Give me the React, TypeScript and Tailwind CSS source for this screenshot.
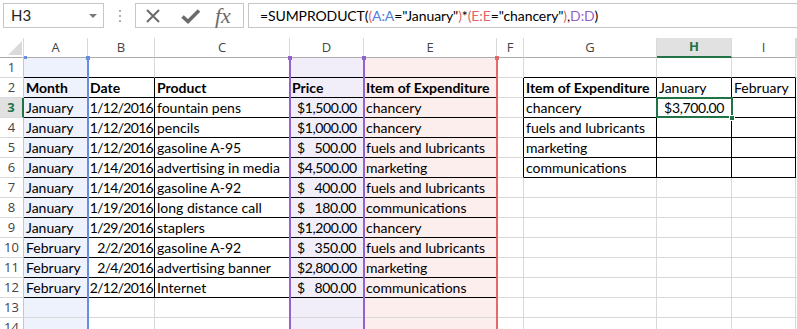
import type { ReactNode } from "react";

const COLS = ["A", "B", "C", "D", "E", "F", "G", "H", "I", ""];

type Row = [string, string, string, string, string];

const MAIN: Row[] = [
  ["Month", "Date", "Product", "Price", "Item of Expenditure"],
  ["January", "1/12/2016", "fountain pens", "1,500.00", "chancery"],
  ["January", "1/12/2016", "pencils", "1,000.00", "chancery"],
  ["January", "1/12/2016", "gasoline A-95", "500.00", "fuels and lubricants"],
  ["January", "1/14/2016", "advertising in media", "4,500.00", "marketing"],
  ["January", "1/14/2016", "gasoline A-92", "400.00", "fuels and lubricants"],
  ["January", "1/19/2016", "long distance call", "180.00", "communications"],
  ["January", "1/29/2016", "staplers", "1,200.00", "chancery"],
  ["February", "2/2/2016", "gasoline A-92", "350.00", "fuels and lubricants"],
  ["February", "2/4/2016", "advertising banner", "2,800.00", "marketing"],
  ["February", "2/12/2016", "Internet", "800.00", "communications"],
];

const SIDE: [string, string, string][] = [
  ["Item of Expenditure", "January", "February"],
  ["chancery", "3,700.00", ""],
  ["fuels and lubricants", "", ""],
  ["marketing", "", ""],
  ["communications", "", ""],
];

function Money({ value }: { value: string }) {
  return (
    <span className="flex w-full justify-between pl-[5px] pr-[5px] tracking-[-0.4px]">
      <span>$</span>
      <span>{value}</span>
    </span>
  );
}

function cellContent(r: number, c: number): { node: ReactNode; right?: boolean; bold?: boolean } {
  if (r >= 2 && r <= 12 && c <= 4) {
    const v = MAIN[r - 2][c];
    if (r === 2) return { node: v, bold: true };
    if (c === 1) return { node: <span className="-mr-[1px] tracking-[-0.7px]">{v}</span>, right: true };
    if (c === 3) return { node: <Money value={v} /> };
    return { node: v };
  }
  if (r >= 2 && r <= 6 && c >= 6 && c <= 8) {
    const v = SIDE[r - 2][c - 6];
    if (r === 2 && c === 6) return { node: v, bold: true };
    if (r === 3 && c === 7) return { node: <Money value={v} /> };
    return { node: v };
  }
  return { node: null };
}

function cellClasses(r: number, c: number) {
  const bottomBlack = (r >= 1 && r <= 12 && c <= 4) || (r >= 1 && r <= 6 && c >= 6 && c <= 8);
  const rightBlack = (r >= 2 && r <= 12 && c >= 1 && c <= 4) || (r >= 2 && r <= 6 && c >= 5 && c <= 8);
  const fill = c === 0 ? "bg-[#edf2fc]" : c === 3 ? "bg-[#f1eefa]" : c === 4 ? "bg-[#fdeeee]" : "bg-white";
  return `${bottomBlack ? "border-b-black" : "border-b-[#d9d9d9]"} ${rightBlack ? "border-r-black" : "border-r-[#d9d9d9]"} ${fill}`;
}

function Toolbar() {
  return (
    <div className="flex h-[38px] items-start pt-[3px]">
      <div className="ml-[3px] flex h-[25px] w-[101px] items-center justify-between border border-[#c6c6c6] pl-[7px] pr-[6px] text-[15px] text-[#222]">
        <span>H3</span>
        <span className="h-0 w-0 border-x-[4px] border-t-[4px] border-x-transparent border-t-[#777]" />
      </div>
      <div className="flex h-[25px] w-[31px] flex-col items-center justify-center gap-[3px]">
        <span className="h-[2px] w-[2px] bg-[#b0b0b0]" />
        <span className="h-[2px] w-[2px] bg-[#b0b0b0]" />
        <span className="h-[2px] w-[2px] bg-[#b0b0b0]" />
      </div>
      <div className="flex h-[25px] w-[109px] items-center border border-[#c6c6c6] pl-[9px]">
        <svg width="16" height="16" viewBox="0 0 16 16" className="shrink-0">
          <path d="M2 2 L14 14 M14 2 L2 14" stroke="#6b6b6b" strokeWidth="2" fill="none" />
        </svg>
        <svg width="20" height="16" viewBox="0 0 20 16" className="ml-[20px] shrink-0">
          <path d="M1.5 8.5 L7 13.5 L18 2.5" stroke="#6b6b6b" strokeWidth="3.6" fill="none" />
        </svg>
        <span className="ml-[14px] font-['Liberation_Serif',serif] text-[22px] italic leading-none text-[#6b6b6b]">fx</span>
      </div>
      <div className="ml-[4px] flex h-[25px] flex-1 items-center border-y border-l border-[#c6c6c6] pl-[11px] text-[14px] tracking-[-0.1px] text-black">
        <span>=SUMPRODUCT(</span>
        <span className="text-[#e06666]">(</span>
        <span className="text-[#4f7ee0]">A:A</span>
        <span>=&quot;January&quot;</span>
        <span className="text-[#e06666]">)</span>
        <span>*</span>
        <span className="text-[#e06666]">(</span>
        <span className="text-[#e06666]">E:E</span>
        <span>=&quot;chancery&quot;</span>
        <span className="text-[#e06666]">)</span>
        <span>,</span>
        <span className="text-[#9462cc]">D:D</span>
        <span>)</span>
      </div>
    </div>
  );
}

function Grid() {
  const rows = Array.from({ length: 14 }, (_, i) => i + 1);
  return (
    <div className="relative grid grid-cols-[24px_64px_67px_135px_74px_133px_27px_133px_75px_64px_1px] font-['Lato',sans-serif]">
      <div className="relative h-5 border-b border-r border-b-[#ababab] border-r-[#d9d9d9]">
        <span className="absolute bottom-[2px] right-[1px] h-0 w-0 border-b-[14px] border-l-[14px] border-b-[#dadada] border-l-transparent" />
      </div>
      {COLS.map((col) =>
        col === "H" ? (
          <div key="hdr-H" className="flex h-5 items-center justify-center border-b-2 border-r border-b-[#217346] border-r-[#d9d9d9] bg-[#e1e1e1] font-['Open_Sans',sans-serif] text-[13px] font-bold text-[#217346]">
            H
          </div>
        ) : (
          <div key={`hdr-${col}`} className="flex h-5 items-center justify-center border-b border-r border-b-[#ababab] border-r-[#d9d9d9] font-['Open_Sans',sans-serif] text-[13px] text-[#444]">
            {col}
          </div>
        )
      )}
      {rows.map((r) => (
        <div key={`row-${r}`} className="contents">
          {r === 3 ? (
            <div className="flex h-5 items-center justify-center border-b border-r-2 border-b-[#d9d9d9] border-r-[#217346] bg-[#e1e1e1] font-['Open_Sans',sans-serif] text-[13px] font-bold text-[#217346]">
              {r}
            </div>
          ) : (
            <div className="flex h-5 items-center justify-center border-b border-r border-b-[#d9d9d9] border-r-[#c6c6c6] font-['Open_Sans',sans-serif] text-[13px] text-[#444]">
              {r}
            </div>
          )}
          {COLS.map((_, c) => {
            const { node, right, bold } = cellContent(r, c);
            return (
              <div
                key={`c-${r}-${c}`}
                className={`flex h-5 items-center overflow-visible whitespace-nowrap border-b border-r px-[2px] pt-[1px] text-[14px] leading-5 text-black ${cellClasses(r, c)} ${right ? "justify-end" : "justify-start"} ${bold ? "font-bold" : "font-normal"}`}
              >
                {node}
              </div>
            );
          })}
        </div>
      ))}

      {/* range highlights from the formula */}
      <span className="absolute left-[87px] top-[19px] bottom-0 w-[2px] bg-[#6b8de0]" />
      <span className="absolute left-[24px] top-[18px] h-[3px] w-[3px] bg-[#6b8de0]" />
      <span className="absolute left-[86px] top-[18px] h-[4px] w-[4px] bg-[#6b8de0]" />
      <span className="absolute left-[289px] top-[19px] bottom-0 w-[2px] bg-[#9462cc]" />
      <span className="absolute left-[288px] top-[18px] h-[4px] w-[4px] bg-[#9462cc]" />
      <span className="absolute left-[363px] top-[19px] bottom-0 w-[2px] bg-[#9462cc]" />
      <span className="absolute left-[362px] top-[18px] h-[4px] w-[4px] bg-[#9462cc]" />
      <span className="absolute left-[496px] top-[19px] bottom-0 w-[2px] bg-[#e26a6a]" />
      <span className="absolute left-[495px] top-[18px] h-[4px] w-[4px] bg-[#e26a6a]" />

      {/* active cell H3 */}
      <span className="absolute left-[656px] top-[59px] h-[21px] w-[77px] border-2 border-[#217346]" />
      <span className="absolute left-[729px] top-[77px] h-[6px] w-[6px] border border-white bg-[#217346]" />
    </div>
  );
}

export default function App() {
  return (
    <div className="h-screen w-full overflow-hidden bg-white font-['Lato',sans-serif]">
      <Toolbar />
      <Grid />
    </div>
  );
}
